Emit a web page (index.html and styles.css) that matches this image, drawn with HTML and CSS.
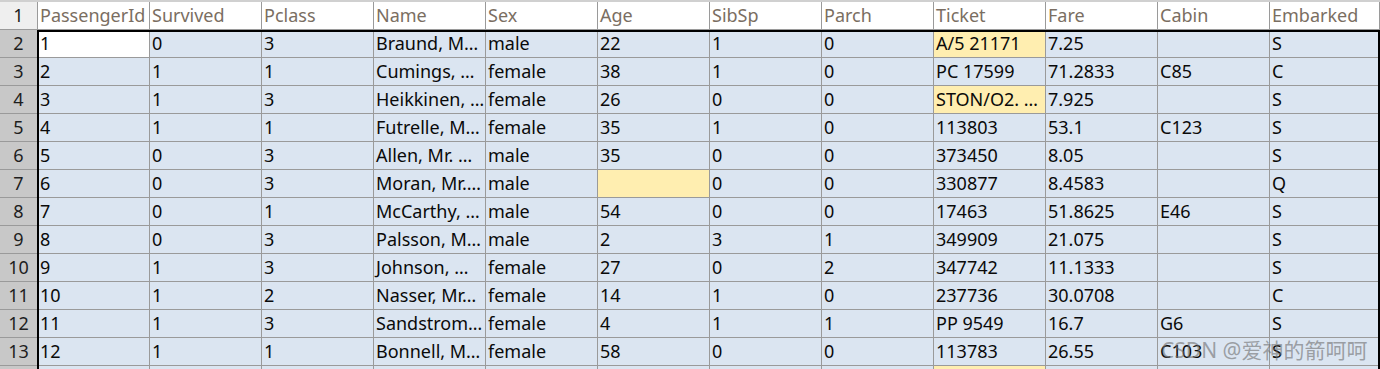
FILE: index.html
```html
<!DOCTYPE html>
<html>
<head>
<meta charset="utf-8">
<link rel="stylesheet" href="styles.css">
</head>
<body>
<div class="topband"></div>
<div class="wrap">
  <div class="sheet">
    <div class="rh rh-head">1</div>
    <div class="c hd">PassengerId</div><div class="c hd">Survived</div><div class="c hd">Pclass</div><div class="c hd">Name</div><div class="c hd">Sex</div><div class="c hd">Age</div><div class="c hd">SibSp</div><div class="c hd">Parch</div><div class="c hd">Ticket</div><div class="c hd">Fare</div><div class="c hd">Cabin</div><div class="c hd">Embarked</div>

    <div class="rh">2</div>
    <div class="c active">1</div><div class="c">0</div><div class="c">3</div><div class="c">Braund, M…</div><div class="c">male</div><div class="c">22</div><div class="c">1</div><div class="c">0</div><div class="c warn">A/5 21171</div><div class="c">7.25</div><div class="c"></div><div class="c">S</div>

    <div class="rh">3</div>
    <div class="c">2</div><div class="c">1</div><div class="c">1</div><div class="c">Cumings, …</div><div class="c">female</div><div class="c">38</div><div class="c">1</div><div class="c">0</div><div class="c">PC 17599</div><div class="c">71.2833</div><div class="c">C85</div><div class="c">C</div>

    <div class="rh">4</div>
    <div class="c">3</div><div class="c">1</div><div class="c">3</div><div class="c">Heikkinen, …</div><div class="c">female</div><div class="c">26</div><div class="c">0</div><div class="c">0</div><div class="c warn">STON/O2. …</div><div class="c">7.925</div><div class="c"></div><div class="c">S</div>

    <div class="rh">5</div>
    <div class="c">4</div><div class="c">1</div><div class="c">1</div><div class="c">Futrelle, M…</div><div class="c">female</div><div class="c">35</div><div class="c">1</div><div class="c">0</div><div class="c">113803</div><div class="c">53.1</div><div class="c">C123</div><div class="c">S</div>

    <div class="rh">6</div>
    <div class="c">5</div><div class="c">0</div><div class="c">3</div><div class="c">Allen, Mr. …</div><div class="c">male</div><div class="c">35</div><div class="c">0</div><div class="c">0</div><div class="c">373450</div><div class="c">8.05</div><div class="c"></div><div class="c">S</div>

    <div class="rh">7</div>
    <div class="c">6</div><div class="c">0</div><div class="c">3</div><div class="c">Moran, Mr.…</div><div class="c">male</div><div class="c warn"></div><div class="c">0</div><div class="c">0</div><div class="c">330877</div><div class="c">8.4583</div><div class="c"></div><div class="c">Q</div>

    <div class="rh">8</div>
    <div class="c">7</div><div class="c">0</div><div class="c">1</div><div class="c">McCarthy, …</div><div class="c">male</div><div class="c">54</div><div class="c">0</div><div class="c">0</div><div class="c">17463</div><div class="c">51.8625</div><div class="c">E46</div><div class="c">S</div>

    <div class="rh">9</div>
    <div class="c">8</div><div class="c">0</div><div class="c">3</div><div class="c">Palsson, M…</div><div class="c">male</div><div class="c">2</div><div class="c">3</div><div class="c">1</div><div class="c">349909</div><div class="c">21.075</div><div class="c"></div><div class="c">S</div>

    <div class="rh">10</div>
    <div class="c">9</div><div class="c">1</div><div class="c">3</div><div class="c">Johnson, …</div><div class="c">female</div><div class="c">27</div><div class="c">0</div><div class="c">2</div><div class="c">347742</div><div class="c">11.1333</div><div class="c"></div><div class="c">S</div>

    <div class="rh">11</div>
    <div class="c">10</div><div class="c">1</div><div class="c">2</div><div class="c">Nasser, Mr…</div><div class="c">female</div><div class="c">14</div><div class="c">1</div><div class="c">0</div><div class="c">237736</div><div class="c">30.0708</div><div class="c"></div><div class="c">C</div>

    <div class="rh">12</div>
    <div class="c">11</div><div class="c">1</div><div class="c">3</div><div class="c">Sandstrom…</div><div class="c">female</div><div class="c">4</div><div class="c">1</div><div class="c">1</div><div class="c">PP 9549</div><div class="c">16.7</div><div class="c">G6</div><div class="c">S</div>

    <div class="rh">13</div>
    <div class="c">12</div><div class="c">1</div><div class="c">1</div><div class="c">Bonnell, M…</div><div class="c">female</div><div class="c">58</div><div class="c">0</div><div class="c">0</div><div class="c">113783</div><div class="c">26.55</div><div class="c">C103</div><div class="c">S</div>

    <div class="rh"></div>
    <div class="c"></div><div class="c"></div><div class="c"></div><div class="c"></div><div class="c"></div><div class="c"></div><div class="c"></div><div class="c"></div><div class="c warn"></div><div class="c"></div><div class="c"></div><div class="c"></div>
  </div>
  <div class="selection"></div>
  <div class="watermark">CSDN @爱神的箭呵呵</div>
</div>
</body>
</html>
```
FILE: styles.css
```css
html, body {
  margin: 0;
  padding: 0;
  background: #ffffff;
  overflow: hidden;
}
body {
  width: 1380px;
  height: 369px;
  font-family: "Noto Sans", "Noto Sans CJK SC", sans-serif;
}
.topband {
  height: 2px;
  background: #d0d0d0;
}
.wrap {
  position: relative;
  height: 367px;
  overflow: hidden;
}
.sheet {
  display: grid;
  grid-template-columns: 38px repeat(11, 112px) 110px;
  grid-auto-rows: 28px;
}
.rh, .c {
  box-sizing: border-box;
  border-right: 1px solid #9a9a9a;
  border-bottom: 1px solid #9a9a9a;
  font-size: 18px;
  line-height: 27px;
  white-space: nowrap;
  overflow: hidden;
}
.rh {
  background: #c8c8c8;
  color: #1e1e1e;
  text-align: center;
}
.rh-head {
  background: #efefef;
}
.c {
  background: #dbe5f1;
  color: #0a0a0a;
  padding-left: 2px;
}
.c.hd {
  background: #ffffff;
  color: #7a6e62;
}
.c.warn {
  background: #ffeeb0;
}
.c.active {
  background: #ffffff;
}
.selection {
  position: absolute;
  left: 37px;
  top: 28px;
  right: 0;
  bottom: -10px;
  border: 2px solid #000000;
  pointer-events: none;
}
.watermark {
  position: absolute;
  left: 1161px;
  top: 334px;
  font-size: 21px;
  line-height: 28px;
  color: rgba(110, 110, 110, 0.6);
  font-family: "Noto Sans", "Noto Sans CJK SC", sans-serif;
  white-space: nowrap;
}
```
